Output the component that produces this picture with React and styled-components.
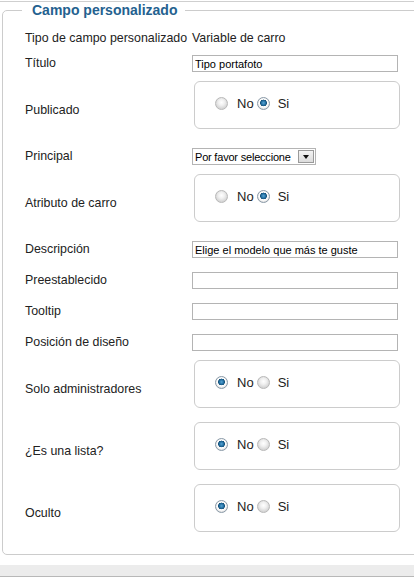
import React from "react";
import styled, { createGlobalStyle } from "styled-components";

const Global = createGlobalStyle`
  html, body { margin: 0; padding: 0; background: #fff; overflow: hidden; }
  body { font-family: "Liberation Sans", Arial, sans-serif; color: #222; }
  * { box-sizing: border-box; }
`;

const Page = styled.div`
  padding-top: 1px;
  width: 414px;
  overflow: hidden;
`;

const TopRule = styled.div`
  border-top: 1px solid #cfcfcf;
`;

const Fieldset = styled.fieldset`
  margin: 0 -40px 0 2px;
  border: 1px solid #cccccc;
  border-radius: 5px;
  padding: 9px 0 10px 22px;
  min-inline-size: 0;
`;

const Legend = styled.legend`
  padding: 0 8px 0 10px;
  margin-left: -3px;
  font-size: 14px;
  font-weight: bold;
  line-height: 16px;
  color: #24618f;
`;

const Row = styled.div`
  display: flex;
  align-items: center;
  padding: ${(p) => (p.$first ? "3px 0 1px" : "2px 0")};
`;

const Label = styled.div`
  width: 167px;
  flex-shrink: 0;
  font-size: 12.4px;
  line-height: 17px;
  color: #222;
  white-space: nowrap;
`;

const Value = styled.div`
  font-size: 12.4px;
  line-height: 17px;
  color: #222;
  white-space: nowrap;
`;

const TextInput = styled.input`
  display: block;
  width: 206px;
  height: 17px;
  margin: 5px 0;
  padding: 0 2px;
  border: 1px solid #b4b4b4;
  background: #fff;
  font-family: "Liberation Sans", Arial, sans-serif;
  font-size: 11px;
  color: #000;
  outline: none;
`;

const Select = styled.div`
  display: flex;
  align-items: center;
  justify-content: space-between;
  width: 124px;
  height: 17px;
  margin: 5px 0;
  padding: 0 1px 0 2px;
  border: 1px solid #b4b4b4;
  font-size: 11px;
  letter-spacing: -0.2px;
  color: #000;
  white-space: nowrap;
`;

const DropButton = styled.div`
  width: 16px;
  height: 13px;
  border: 1px solid #9a9a9a;
  background: linear-gradient(#f4f4f4, #dcdcdc);
  display: flex;
  align-items: center;
  justify-content: center;
  &::after {
    content: "";
    border-left: 3.5px solid transparent;
    border-right: 3.5px solid transparent;
    border-top: 4px solid #111;
    margin-top: 1px;
  }
`;

const RadioBox = styled.div`
  display: flex;
  align-items: center;
  width: 206px;
  height: 48px;
  margin: 0 0 10px 2px;
  padding: 0 0 4px 20px;
  border: 1px solid #cccccc;
  border-radius: 6px;
  font-size: 13px;
  color: #222;
`;

const Radio = styled.span`
  display: inline-block;
  width: 13px;
  height: 13px;
  border-radius: 50%;
  flex-shrink: 0;
  border: 1px solid ${(p) => (p.$on ? "#8a9aa8" : "#b8b8b8")};
  background: ${(p) =>
    p.$on
      ? "radial-gradient(circle at 50% 45%, #5aa6d6 0, #1e6a9c 2.4px, #174f76 3.2px, #ffffff 3.6px, #f4f4f4 5px, #dcdcdc 6px)"
      : "radial-gradient(circle at 50% 40%, #ffffff 0, #f0f0f0 3px, #d6d6d6 6px)"};
  margin-right: ${(p) => (p.$gap ? p.$gap : 0)}px;
`;

const Option = styled.span`
  margin-right: ${(p) => p.$gap || 0}px;
  line-height: 15px;
`;

const BottomBand = styled.div`
  margin-top: 10px;
  height: 12px;
  background: #ececec;
  border-bottom: 1px solid #b8b8b8;
`;

function YesNo({ yes }) {
  return (
    <RadioBox>
      <Radio $on={!yes} $gap={9} />
      <Option $gap={3}>No</Option>
      <Radio $on={yes} $gap={8} />
      <Option>Si</Option>
    </RadioBox>
  );
}

function TextRow({ label, value }) {
  return (
    <Row>
      <Label>{label}</Label>
      <TextInput readOnly defaultValue={value || ""} />
    </Row>
  );
}

function RadioRow({ label, yes }) {
  return (
    <Row>
      <Label>{label}</Label>
      <YesNo yes={yes} />
    </Row>
  );
}

export default function App() {
  return (
    <Page>
      <Global />
      <TopRule />
      <Fieldset>
        <Legend>Campo personalizado</Legend>
        <Row $first>
          <Label>Tipo de campo personalizado</Label>
          <Value>Variable de carro</Value>
        </Row>
        <TextRow label="Título" value="Tipo portafoto" />
        <RadioRow label="Publicado" yes />
        <Row>
          <Label>Principal</Label>
          <Select>
            <span>Por favor seleccione</span>
            <DropButton />
          </Select>
        </Row>
        <RadioRow label="Atributo de carro" yes />
        <TextRow label="Descripción" value="Elige el modelo que más te guste" />
        <TextRow label="Preestablecido" />
        <TextRow label="Tooltip" />
        <TextRow label="Posición de diseño" />
        <RadioRow label="Solo administradores" />
        <RadioRow label="¿Es una lista?" />
        <RadioRow label="Oculto" />
      </Fieldset>
      <BottomBand />
    </Page>
  );
}
